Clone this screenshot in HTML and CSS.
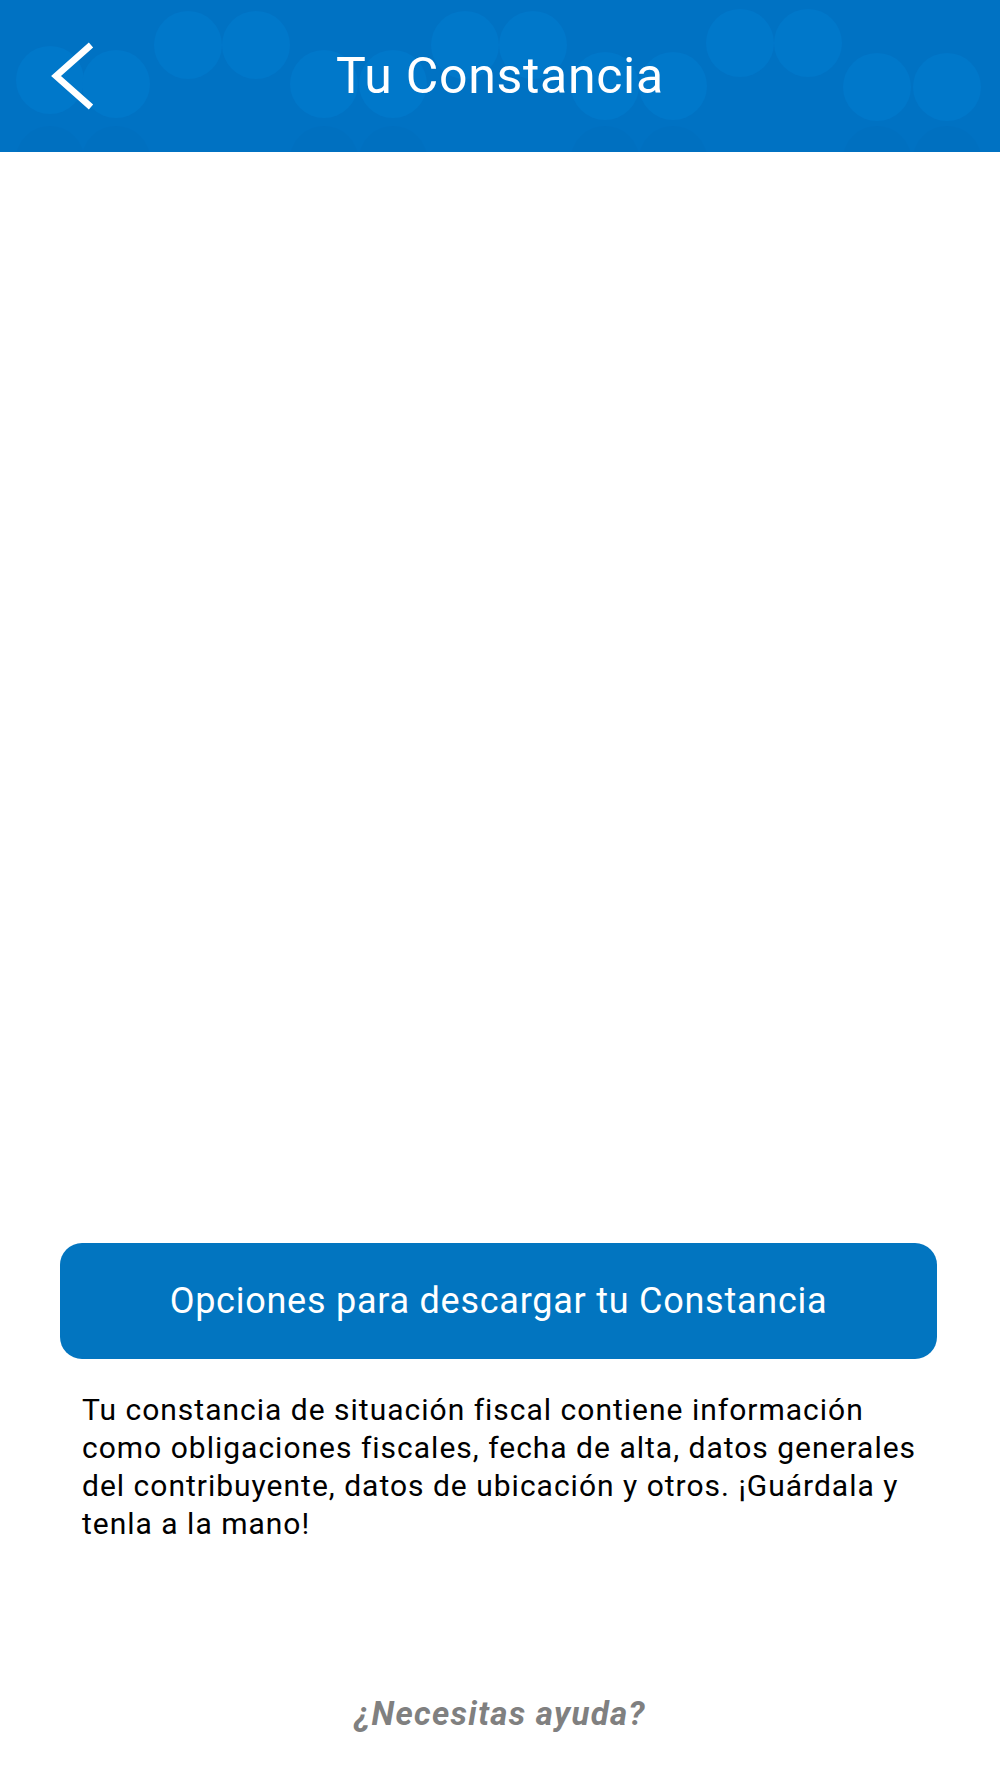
FILE: index.html
```html
<!DOCTYPE html>
<html lang="es">
<head>
<meta charset="utf-8">
<title>Tu Constancia</title>
<link rel="stylesheet" href="styles.css">
</head>
<body>
<header class="topbar">
  <svg class="topbar-bg" width="1000" height="152" viewBox="0 0 1000 152" aria-hidden="true">
    <rect width="1000" height="152" fill="#0072c3"/>
    <g fill="#0078ca">
      <circle cx="50" cy="80" r="34"/><circle cx="116" cy="84" r="34"/>
      <circle cx="188" cy="45" r="34"/><circle cx="256" cy="45" r="34"/>
      <circle cx="324" cy="84" r="34"/><circle cx="393" cy="84" r="34"/>
      <circle cx="465" cy="45" r="34"/><circle cx="533" cy="45" r="34"/>
      <circle cx="605" cy="86" r="34"/><circle cx="673" cy="86" r="34"/>
      <circle cx="740" cy="43" r="34"/><circle cx="808" cy="43" r="34"/>
      <circle cx="877" cy="87" r="34"/><circle cx="947" cy="87" r="34"/>
    </g>
    <g fill="#0070c0">
      <circle cx="50" cy="160" r="34"/><circle cx="116" cy="160" r="34"/>
      <circle cx="324" cy="160" r="34"/><circle cx="393" cy="160" r="34"/>
      <circle cx="605" cy="160" r="34"/><circle cx="673" cy="160" r="34"/>
      <circle cx="877" cy="160" r="34"/><circle cx="947" cy="160" r="34"/>
    </g>
  </svg>
  <button class="back" aria-label="Regresar">
    <svg width="60" height="80" viewBox="40 36 60 80">
      <polyline points="91,45 56,76 91,107" fill="none" stroke="#ffffff" stroke-width="6.5" stroke-linejoin="miter"/>
    </svg>
  </button>
  <h1 class="title">Tu Constancia</h1>
</header>
<main class="content">
  <div class="viewer"></div>
  <button class="primary-btn">Opciones para descargar tu Constancia</button>
  <p class="info">Tu constancia de situación fiscal contiene información como obligaciones fiscales, fecha de alta, datos generales del contribuyente, datos de ubicación y otros. ¡Guárdala y tenla a la mano!</p>
  <p class="help">¿Necesitas ayuda?</p>
</main>
</body>
</html>
```

FILE: styles.css
```css
* { box-sizing: border-box; }
html, body {
  margin: 0;
  padding: 0;
  background: #ffffff;
  font-family: Roboto, "Noto Sans", "Liberation Sans", sans-serif;
}
.topbar {
  position: relative;
  height: 152px;
  overflow: hidden;
  display: flex;
  align-items: center;
  justify-content: center;
  background: #0072c3;
}
.topbar-bg {
  position: absolute;
  left: 0;
  top: 0;
}
.back {
  position: absolute;
  left: 40px;
  top: 36px;
  width: 60px;
  height: 80px;
  padding: 0;
  border: 0;
  background: transparent;
}
.back svg { display: block; }
.title {
  position: relative;
  margin: 0;
  color: #ffffff;
  font-weight: 400;
  font-size: 50px;
  line-height: 58px;
  letter-spacing: 0.7px;
}
.content {
  display: flex;
  flex-direction: column;
}
.viewer {
  height: 1091px;
}
.primary-btn {
  margin: 0 63px 0 60px;
  height: 116px;
  border: 0;
  border-radius: 22px;
  background: #0275c0;
  color: #ffffff;
  font-family: Roboto, "Noto Sans", "Liberation Sans", sans-serif;
  font-size: 36px;
  font-weight: 400;
  letter-spacing: 0.75px;
}
.info {
  margin: 32px 68px 0 82px;
  color: #000000;
  font-size: 30px;
  line-height: 38px;
  letter-spacing: 1px;
}
.help {
  margin: 153px 0 0 0;
  text-align: center;
  color: #808080;
  font-size: 33px;
  line-height: 36px;
  font-weight: 700;
  font-style: italic;
  letter-spacing: 1.3px;
}
```
